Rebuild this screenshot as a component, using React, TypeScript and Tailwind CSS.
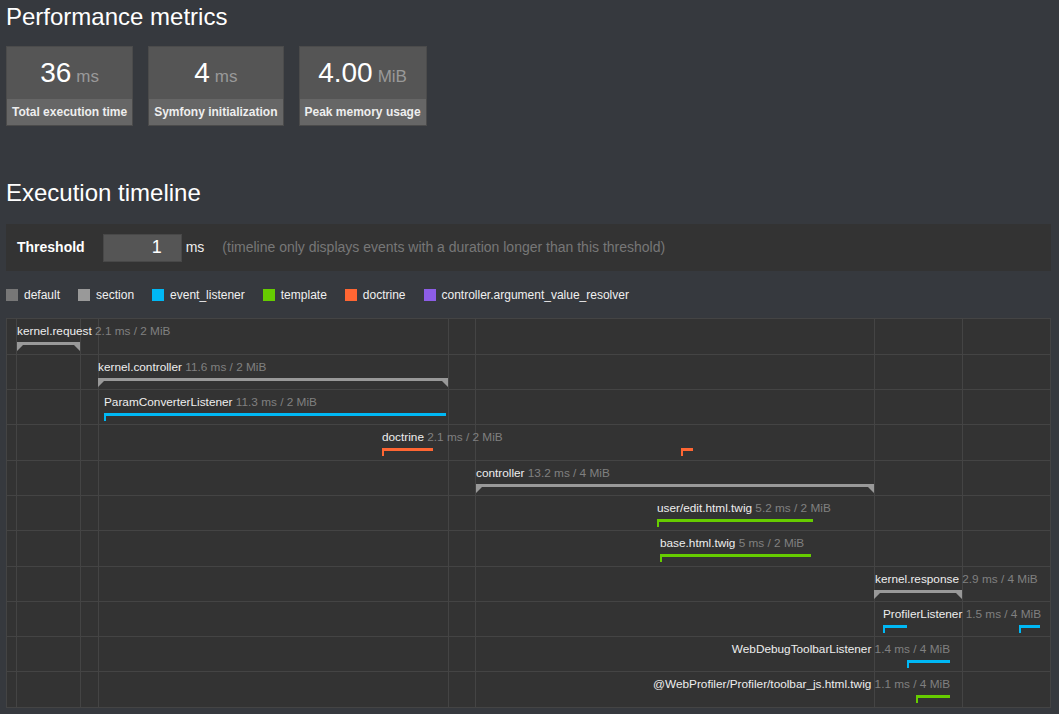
import React from "react";

type BarKind = "section" | "listener" | "template" | "doctrine";
type BarDef = { x1: number; x2: number; kind: BarKind };
type RowDef = {
  h: 35 | 36;
  name: string;
  dur: string;
  lx?: number;
  rx?: number;
  bars: BarDef[];
};

const rows: RowDef[] = [
  { h: 35, name: "kernel.request", dur: "2.1 ms / 2 MiB", lx: 17, bars: [{ x1: 17, x2: 80, kind: "section" }] },
  { h: 35, name: "kernel.controller", dur: "11.6 ms / 2 MiB", lx: 98, bars: [{ x1: 98, x2: 448, kind: "section" }] },
  { h: 35, name: "ParamConverterListener", dur: "11.3 ms / 2 MiB", lx: 104, bars: [{ x1: 104, x2: 446, kind: "listener" }] },
  {
    h: 36,
    name: "doctrine",
    dur: "2.1 ms / 2 MiB",
    lx: 382,
    bars: [
      { x1: 382, x2: 433, kind: "doctrine" },
      { x1: 681, x2: 693, kind: "doctrine" },
    ],
  },
  { h: 35, name: "controller", dur: "13.2 ms / 4 MiB", lx: 476, bars: [{ x1: 476, x2: 874, kind: "section" }] },
  { h: 35, name: "user/edit.html.twig", dur: "5.2 ms / 2 MiB", lx: 657, bars: [{ x1: 657, x2: 813, kind: "template" }] },
  { h: 36, name: "base.html.twig", dur: "5 ms / 2 MiB", lx: 660, bars: [{ x1: 660, x2: 811, kind: "template" }] },
  { h: 35, name: "kernel.response", dur: "2.9 ms / 4 MiB", lx: 875, bars: [{ x1: 874, x2: 962, kind: "section" }] },
  {
    h: 35,
    name: "ProfilerListener",
    dur: "1.5 ms / 4 MiB",
    lx: 883,
    bars: [
      { x1: 883, x2: 907, kind: "listener" },
      { x1: 1019, x2: 1040, kind: "listener" },
    ],
  },
  { h: 35, name: "WebDebugToolbarListener", dur: "1.4 ms / 4 MiB", rx: 950, bars: [{ x1: 907, x2: 950, kind: "listener" }] },
  {
    h: 36,
    name: "@WebProfiler/Profiler/toolbar_js.html.twig",
    dur: "1.1 ms / 4 MiB",
    rx: 950,
    bars: [{ x1: 916, x2: 950, kind: "template" }],
  },
];

const gridXs = [16, 80, 98, 448, 475, 874, 962];

const barColor: Record<BarKind, string> = {
  section: "#999999",
  listener: "#00b8f5",
  template: "#66cc00",
  doctrine: "#ff6633",
};

const legend = [
  { label: "default", cls: "bg-[#777777]" },
  { label: "section", cls: "bg-[#999999]" },
  { label: "event_listener", cls: "bg-[#00b8f5]" },
  { label: "template", cls: "bg-[#66cc00]" },
  { label: "doctrine", cls: "bg-[#ff6633]" },
  { label: "controller.argument_value_resolver", cls: "bg-[#8c5de6]" },
];

const ORIGIN = 7; // left edge of the timeline's padding box
const RIGHT_EDGE = 1050;

function Bar({ bar }: { bar: BarDef }) {
  const w = bar.x2 - bar.x1;
  const points =
    bar.kind === "section"
      ? `0,0 ${w},0 ${w},9 ${w - 6},3 6,3 0,9`
      : `0,0 ${w},0 ${w},3 2,3 2,8 0,8`;
  return (
    <svg
      className="absolute top-[23px]"
      style={{ left: bar.x1 - ORIGIN }}
      width={w}
      height={9}
      viewBox={`0 0 ${w} 9`}
    >
      <polygon points={points} fill={barColor[bar.kind]} shapeRendering={bar.kind === "section" ? "auto" : "crispEdges"} />
    </svg>
  );
}

function Metric({ value, unit, label }: { value: string; unit: string; label: string }) {
  return (
    <div className="flex flex-col border border-[#4b4b4b]">
      <div className="flex h-[52px] items-center justify-center bg-[#555555] pt-[3px]">
        <div className="flex items-baseline">
          <span className="text-[28px] leading-[28px] text-white">{value}</span>
          <span className="ml-[5px] text-[17px] leading-[28px] text-[#999999]">{unit}</span>
        </div>
      </div>
      <div className="flex h-[26px] items-center justify-center whitespace-nowrap bg-[#666666] px-[5px] text-[12px] font-bold text-[#eeeeee]">
        {label}
      </div>
    </div>
  );
}

export default function App() {
  return (
    <div className="min-h-screen bg-[#36393e] pl-[6px] pr-[8px] pt-[3px] font-['Liberation_Sans',Helvetica,Arial,sans-serif] text-[#f0f0f0]">
      <h2 className="text-[24px] leading-[28px] font-normal text-white">Performance metrics</h2>

      <div className="mt-[15px] flex gap-[15px]">
        <Metric value="36" unit="ms" label="Total execution time" />
        <Metric value="4" unit="ms" label="Symfony initialization" />
        <Metric value="4.00" unit="MiB" label="Peak memory usage" />
      </div>

      <h2 className="mt-[53px] text-[24px] leading-[28px] font-normal text-white">Execution timeline</h2>

      <div className="mt-[17px] flex h-[47px] items-center bg-[#333333] pl-[11px]">
        <span className="text-[14px] font-bold text-white">Threshold</span>
        <div className="ml-[18px] flex h-[28px] w-[79px] items-center justify-end border border-[#484848] bg-[#555555] pr-[19px] text-[18px] text-white">
          1
        </div>
        <span className="ml-[4px] text-[14px] text-[#eeeeee]">ms</span>
        <span className="ml-[18px] text-[14px] text-[#777777]">
          (timeline only displays events with a duration longer than this threshold)
        </span>
      </div>

      <div className="mt-[16px] flex h-[16px] items-center gap-[18px] text-[12px] leading-[16px]">
        {legend.map((l) => (
          <div key={l.label} className="flex items-center gap-[6px]">
            <span className={`h-[12px] w-[12px] ${l.cls}`} />
            <span className="text-[#f0f0f0]">{l.label}</span>
          </div>
        ))}
      </div>

      <div className="relative mt-[15px] border border-[#444444] bg-[#333333] text-[11.8px] leading-[16px]">
        {gridXs.map((x) => (
          <div key={x} className="absolute bottom-0 top-0 w-px bg-[#444444]" style={{ left: x - ORIGIN }} />
        ))}
        {rows.map((r, i) => (
          <div
            key={r.name}
            className={`relative ${r.h === 36 ? "h-[36px]" : "h-[35px]"} ${i > 0 ? "border-t border-[#444444]" : ""}`}
          >
            <div
              className="absolute top-[4px] whitespace-nowrap"
              style={r.rx !== undefined ? { right: RIGHT_EDGE - r.rx } : { left: (r.lx ?? 0) - ORIGIN }}
            >
              <span className="text-[#eeeeee]">{r.name}</span>{" "}
              <span className="text-[#808080]">{r.dur}</span>
            </div>
            {r.bars.map((b, j) => (
              <Bar key={j} bar={b} />
            ))}
          </div>
        ))}
      </div>
    </div>
  );
}
